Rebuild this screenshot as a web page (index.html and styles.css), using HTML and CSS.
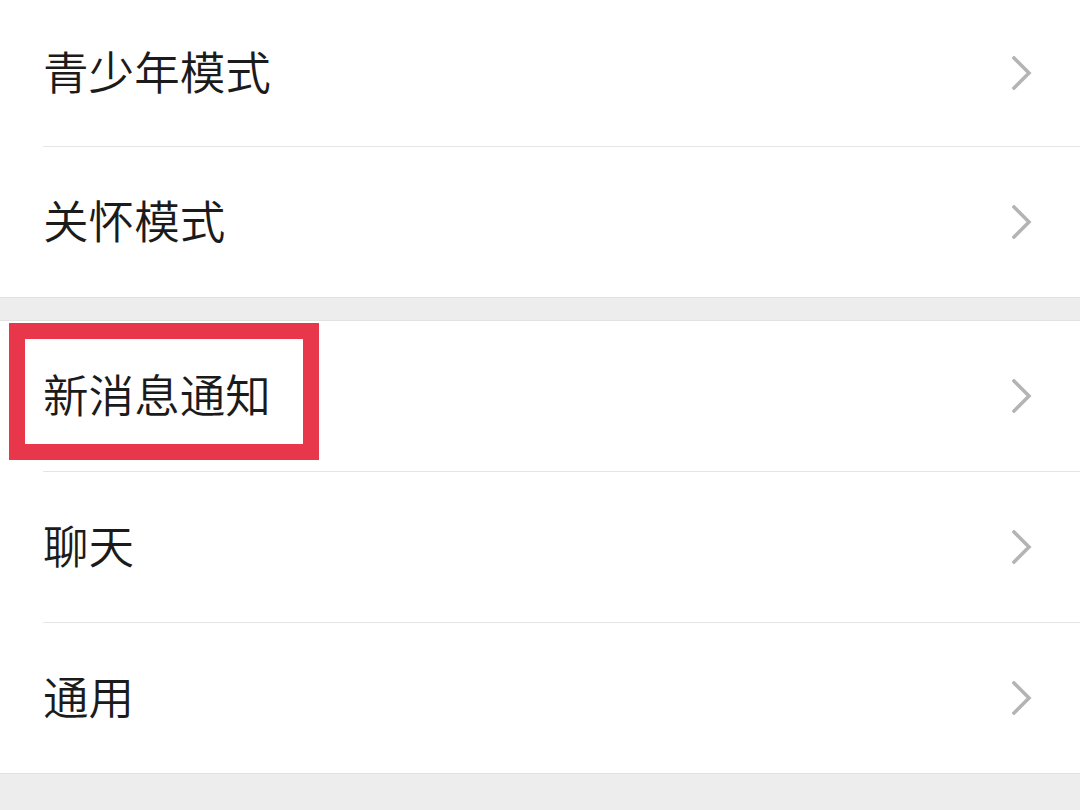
FILE: index.html
```html
<!DOCTYPE html>
<html lang="zh-CN">
<head>
<meta charset="utf-8">
<title>设置</title>
<link rel="stylesheet" href="styles.css">
</head>
<body>
<div class="page">
  <section class="group group-first">
    <div class="row row-first">
      <span class="label">青少年模式</span>
      <svg class="chevron" viewBox="0 0 20 34" width="20" height="34"><polyline points="2,2 17,17 2,32"/></svg>
    </div>
    <div class="row">
      <span class="label">关怀模式</span>
      <svg class="chevron" viewBox="0 0 20 34" width="20" height="34"><polyline points="2,2 17,17 2,32"/></svg>
    </div>
  </section>
  <section class="group">
    <div class="row highlighted">
      <span class="label">新消息通知</span>
      <svg class="chevron" viewBox="0 0 20 34" width="20" height="34"><polyline points="2,2 17,17 2,32"/></svg>
      <div class="highlight-box"></div>
    </div>
    <div class="row">
      <span class="label">聊天</span>
      <svg class="chevron" viewBox="0 0 20 34" width="20" height="34"><polyline points="2,2 17,17 2,32"/></svg>
    </div>
    <div class="row">
      <span class="label">通用</span>
      <svg class="chevron" viewBox="0 0 20 34" width="20" height="34"><polyline points="2,2 17,17 2,32"/></svg>
    </div>
  </section>
</div>
</body>
</html>
```

FILE: styles.css
```css
html, body {
  margin: 0;
  padding: 0;
  background: #ededed;
}

body {
  width: 1080px;
  height: 810px;
  overflow: hidden;
  font-family: "Noto Sans CJK SC", "Noto Sans", sans-serif;
}

.page {
  display: flex;
  flex-direction: column;
  gap: 22px;
}

.group {
  background: #ffffff;
  border-top: 1px solid #e2e2e2;
  border-bottom: 1px solid #e2e2e2;
  display: flex;
  flex-direction: column;
}

.group-first {
  border-top: none;
}

.row {
  position: relative;
  height: 150px;
  display: flex;
  align-items: center;
  justify-content: space-between;
  padding: 0 48px 0 43px;
  box-sizing: border-box;
}

.row-first {
  height: 146px;
}

.row + .row::before {
  content: "";
  position: absolute;
  top: -1px;
  left: 43px;
  right: 0;
  height: 1px;
  background: #e5e5e5;
}

.row + .row {
  margin-top: 1px;
}

.label {
  font-size: 45.6px;
  font-weight: 350;
  color: #1b1b1b;
  line-height: 1;
  padding-bottom: 5px;
}

.chevron {
  fill: none;
  stroke: #b4b4b4;
  stroke-width: 3.6;
  stroke-linecap: square;
  stroke-linejoin: miter;
}

.highlight-box {
  position: absolute;
  left: 9px;
  top: 2px;
  width: 310px;
  height: 137px;
  border: 16px solid #e8364a;
  box-sizing: border-box;
}
```
